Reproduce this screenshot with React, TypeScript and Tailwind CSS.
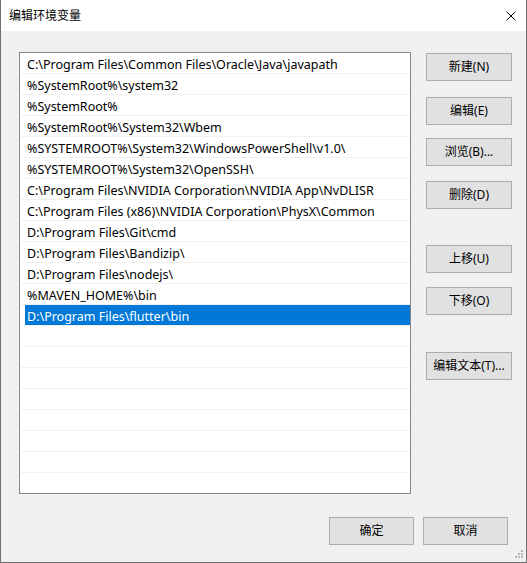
import * as React from 'react';

const PATHS = [
  'C:\\Program Files\\Common Files\\Oracle\\Java\\javapath',
  '%SystemRoot%\\system32',
  '%SystemRoot%',
  '%SystemRoot%\\System32\\Wbem',
  '%SYSTEMROOT%\\System32\\WindowsPowerShell\\v1.0\\',
  '%SYSTEMROOT%\\System32\\OpenSSH\\',
  'C:\\Program Files\\NVIDIA Corporation\\NVIDIA App\\NvDLISR',
  'C:\\Program Files (x86)\\NVIDIA Corporation\\PhysX\\Common',
  'D:\\Program Files\\Git\\cmd',
  'D:\\Program Files\\Bandizip\\',
  'D:\\Program Files\\nodejs\\',
  '%MAVEN_HOME%\\bin',
  'D:\\Program Files\\flutter\\bin',
];

const TOTAL_ROWS = 21;
const SELECTED = 12;

// right-hand column, each button with its own top spacing
const SIDE_BUTTONS = [
  { label: '新建(N)', mt: 'mt-[1px]' },
  { label: '编辑(E)', mt: 'mt-[16px]' },
  { label: '浏览(B)...', mt: 'mt-[13px]' },
  { label: '删除(D)', mt: 'mt-[15px]' },
  { label: '上移(U)', mt: 'mt-[36px]' },
  { label: '下移(O)', mt: 'mt-[14px]' },
  { label: '编辑文本(T)...', mt: 'mt-[37px]' },
];

const WinButton = ({ children, className = '' }: { children: React.ReactNode; className?: string }) => (
  <div
    className={`flex h-[28px] items-center justify-center border border-[#adadad] bg-[#e1e1e1] text-[12px] text-black ${className}`}
  >
    {children}
  </div>
);

export default function App() {
  return (
    <div
      className="flex h-[563px] w-[527px] flex-col border-x border-b border-[#707070] bg-white text-[12px] text-black"
      style={{ fontFamily: '"Noto Sans", "Noto Sans CJK SC", sans-serif' }}
    >
      {/* Title bar */}
      <div className="flex h-[31px] items-center justify-between bg-white pl-[8px] pr-[9px]">
        <span className="leading-none">编辑环境变量</span>
        <svg width="10" height="10" viewBox="0 0 10 10" className="mr-[1px]">
          <path d="M0.5 0.5 L9.5 9.5 M9.5 0.5 L0.5 9.5" stroke="#000" strokeWidth="1" />
        </svg>
      </div>

      <div className="relative flex flex-1 flex-col bg-[#f0f0f0]">
        <div className="flex pl-[18px] pt-[21px]">
          {/* Path list */}
          <div className="h-[442px] w-[392px] overflow-hidden border border-[#828790] bg-white pl-[1px]">
            {Array.from({ length: TOTAL_ROWS }).map((_, i) => (
              <div key={i} className="h-[21px] border-b border-[#f0f0f0]">
                {PATHS[i] !== undefined && (
                  <div
                    className={`ml-[4px] flex h-[20px] items-center whitespace-nowrap pl-[2px] pt-[4px] text-[12.5px] ${
                      i === SELECTED ? 'bg-[#0078d7] text-white' : ''
                    }`}
                  >
                    {PATHS[i]}
                  </div>
                )}
              </div>
            ))}
          </div>

          <div className="ml-[15px] flex w-[86px] flex-col">
            {SIDE_BUTTONS.map((b) => (
              <WinButton key={b.label} className={b.mt}>
                {b.label}
              </WinButton>
            ))}
          </div>
        </div>

        <div className="mt-[23px] flex justify-end gap-[9px] pr-[18px]">
          <WinButton className="w-[85px]">确定</WinButton>
          <WinButton className="w-[85px]">取消</WinButton>
        </div>

        {/* Size grip */}
        <svg width="9" height="9" viewBox="0 0 9 9" className="absolute bottom-[3px] right-[2px]">
          <rect x="6" y="0" width="2" height="2" fill="#b4b4b4" />
          <rect x="3" y="3" width="2" height="2" fill="#b4b4b4" />
          <rect x="6" y="3" width="2" height="2" fill="#b4b4b4" />
          <rect x="0" y="6" width="2" height="2" fill="#b4b4b4" />
          <rect x="3" y="6" width="2" height="2" fill="#b4b4b4" />
          <rect x="6" y="6" width="2" height="2" fill="#b4b4b4" />
        </svg>
      </div>
    </div>
  );
}
